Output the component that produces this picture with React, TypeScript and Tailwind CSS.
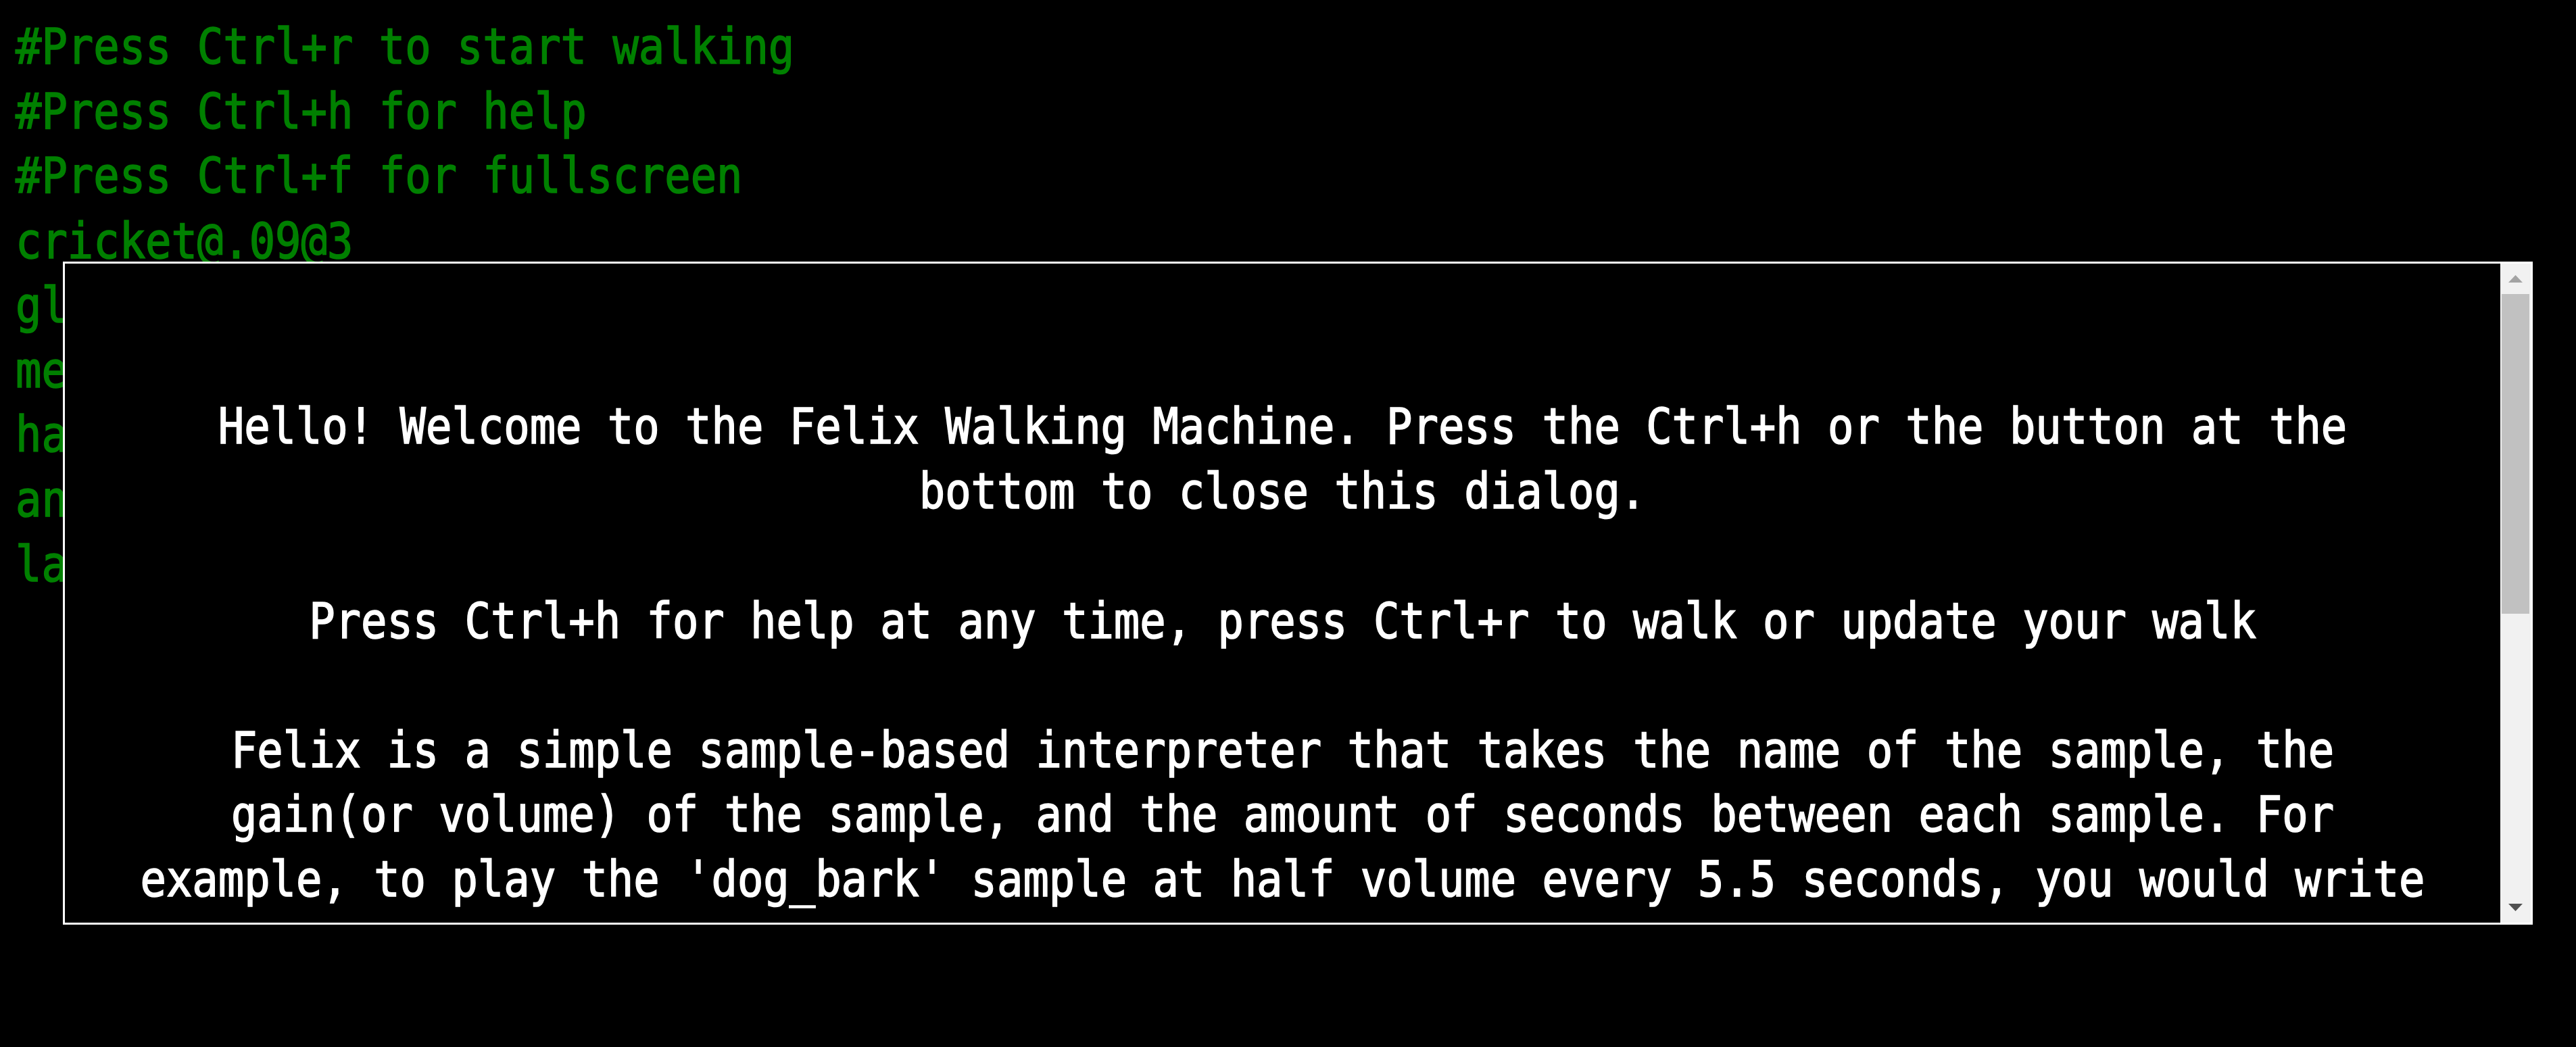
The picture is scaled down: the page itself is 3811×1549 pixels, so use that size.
import React from 'react';

const consoleLines = [
  '#Press Ctrl+r to start walking',
  '#Press Ctrl+h for help',
  '#Press Ctrl+f for fullscreen',
  'cricket@.09@3',
  'glass_chime@.2@7',
  'metal_clang@.3@4',
  'hammer@.4@6',
  'ant_march@.1@2',
  'laugh@.5@9',
];

const helpParagraphs = [
  'Hello! Welcome to the Felix Walking Machine. Press the Ctrl+h or the button at the bottom to close this dialog.',
  'Press Ctrl+h for help at any time, press Ctrl+r to walk or update your walk',
  "Felix is a simple sample-based interpreter that takes the name of the sample, the gain(or volume) of the sample, and the amount of seconds between each sample. For example, to play the 'dog_bark' sample at half volume every 5.5 seconds, you would write",
  'dog_bark@.5@5.5',
  'Lines that start with a # are comments and are ignored by the machine.',
];

const App: React.FC = () => {
  return (
    <div className="relative h-screen w-full overflow-hidden bg-black">
      {/* Walk editor */}
      <div className="pl-[23px] pt-[22px]">
        <div className="origin-top [transform:scaleY(1.15)] whitespace-pre font-['DejaVu_Sans_Mono',monospace] text-[63.8px] leading-[83.2px] text-[#008000] [-webkit-text-stroke:1.5px_#008000]">
          {consoleLines.map((line, i) => (
            <div key={i}>{line}</div>
          ))}
        </div>
      </div>

      {/* Help dialog */}
      <div className="absolute left-[93px] top-[387px] flex h-[981px] w-[3654px] border-[3px] border-white bg-black">
        <div className="flex-1 overflow-hidden pt-[194px]">
          <div className="mx-auto w-[88.5ch] origin-top [transform:scaleY(1.15)] text-center font-['DejaVu_Sans_Mono',monospace] text-[63.8px] leading-[83.2px] text-white [-webkit-text-stroke:1.5px_white]">
            {helpParagraphs.map((p, i) => (
              <p key={i} className="mb-[83.2px]">
                {p}
              </p>
            ))}
          </div>
        </div>

        {/* Scrollbar */}
        <div className="flex w-[45px] flex-col bg-[#f1f1f1]">
          <div className="flex h-[45px] items-center justify-center">
            <svg width="21" height="11" viewBox="0 0 21 11">
              <polygon points="0,11 10.5,0 21,11" fill="#a3a3a3" />
            </svg>
          </div>
          <div className="px-[2px]">
            <div className="h-[473px] bg-[#c1c1c1]" />
          </div>
          <div className="flex-1" />
          <div className="flex h-[45px] items-center justify-center">
            <svg width="21" height="11" viewBox="0 0 21 11">
              <polygon points="0,0 21,0 10.5,11" fill="#505050" />
            </svg>
          </div>
        </div>
      </div>
    </div>
  );
};

export default App;
